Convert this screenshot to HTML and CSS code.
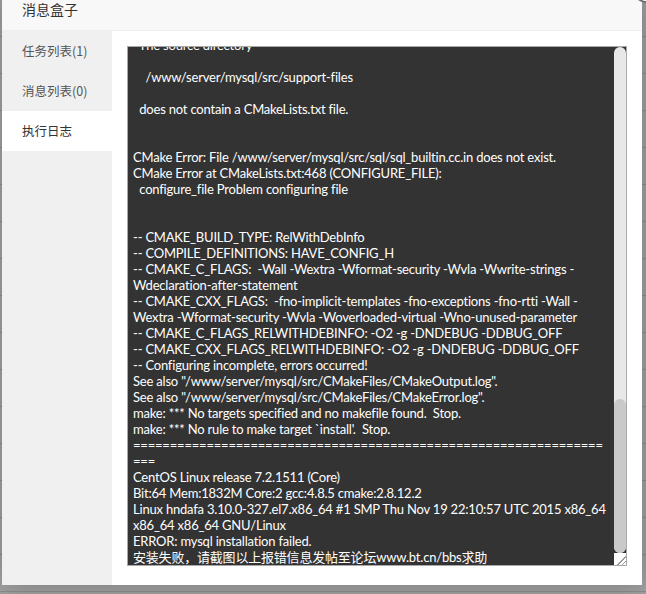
FILE: index.html
```html
<!DOCTYPE html>
<html lang="zh-CN">
<head>
  <meta charset="UTF-8" />
  <title>消息盒子</title>
  <link rel="stylesheet" href="styles.css">
</head>
<body>
  <div class="layer">
    <span class="layer-close"></span>
    <div class="layer-title">消息盒子</div>
    <div class="layer-body">
      <ul class="tabs">
        <li>任务列表(1)</li>
        <li>消息列表(0)</li>
        <li class="active">执行日志</li>
      </ul>
      <div class="tab-content">
        <div class="log-box">
          <div class="log-view">
<pre class="log-lines">  The source directory

    /www/server/mysql/src/support-files

  does not contain a CMakeLists.txt file.


CMake Error: File /www/server/mysql/src/sql/sql_builtin.cc.in does not exist.
CMake Error at CMakeLists.txt:468 (CONFIGURE_FILE):
  configure_file Problem configuring file


-- CMAKE_BUILD_TYPE: RelWithDebInfo
-- COMPILE_DEFINITIONS: HAVE_CONFIG_H
-- CMAKE_C_FLAGS:  -Wall -Wextra -Wformat-security -Wvla -Wwrite-strings -
Wdeclaration-after-statement
-- CMAKE_CXX_FLAGS:  -fno-implicit-templates -fno-exceptions -fno-rtti -Wall -
Wextra -Wformat-security -Wvla -Woverloaded-virtual -Wno-unused-parameter
-- CMAKE_C_FLAGS_RELWITHDEBINFO: -O2 -g -DNDEBUG -DDBUG_OFF
-- CMAKE_CXX_FLAGS_RELWITHDEBINFO: -O2 -g -DNDEBUG -DDBUG_OFF
-- Configuring incomplete, errors occurred!
See also "/www/server/mysql/src/CMakeFiles/CMakeOutput.log".
See also "/www/server/mysql/src/CMakeFiles/CMakeError.log".
make: *** No targets specified and no makefile found.  Stop.
make: *** No rule to make target `install'.  Stop.
================================================================
===
CentOS Linux release 7.2.1511 (Core)
Bit:64 Mem:1832M Core:2 gcc:4.8.5 cmake:2.8.12.2
Linux hndafa 3.10.0-327.el7.x86_64 #1 SMP Thu Nov 19 22:10:57 UTC 2015 x86_64
x86_64 x86_64 GNU/Linux
ERROR: mysql installation failed.
安装失败，请截图以上报错信息发帖至论坛www.bt.cn/bbs求助</pre>
          </div>
          <div class="scrollbar">
            <div class="scroll-track"><div class="scroll-thumb"></div></div>
            <div class="resizer"></div>
          </div>
        </div>
      </div>
    </div>
  </div>
</body>
</html>
```

FILE: styles.css
```css
html, body {
  height: 100%;
}

body {
  margin: 0;
  overflow: hidden;
  background: #a2a2a2;
  background-image: repeating-linear-gradient(#a2a2a2 0, #a2a2a2 36px, #8e8e8e 36px, #8e8e8e 37px);
  font-family: "Noto Sans CJK SC", sans-serif;
}

.layer {
  position: relative;
  width: 640px;
  margin: -12px 0 0 2px;
  background: #fff;
  box-shadow: 1px 1px 30px rgba(0, 0, 0, 0.25);
}

.layer-close {
  position: absolute;
  top: -15px;
  right: -20px;
  width: 26px;
  height: 26px;
  border-radius: 50%;
  border: 2px solid #6f6f6f;
  background: #fff;
}

.layer-title {
  height: 42px;
  line-height: 42px;
  padding-left: 20px;
  font-size: 14px;
  color: #333;
  background: #f8f8f8;
  border-bottom: 1px solid #eee;
}

.layer-body {
  display: flex;
  height: 554px;
}

.tabs {
  flex: 0 0 110px;
  margin: 0;
  padding: 0;
  list-style: none;
  background: #f0f0f0;
}

.tabs li {
  height: 40px;
  line-height: 40px;
  padding-left: 20px;
  font-size: 12.5px;
  color: #555;
}

.tabs li.active {
  background: #fff;
  color: #333;
}

.tab-content {
  flex: 1;
  min-width: 0;
  padding: 15px 15px 19px;
}

.log-box {
  display: flex;
  height: 518px;
  border: 1px solid #a9a9a9;
  background: #333;
}

.log-view {
  flex: 1;
  min-width: 0;
  display: flex;
  flex-direction: column;
  justify-content: flex-end;
  overflow: hidden;
  padding-left: 5px;
}

.log-lines {
  margin: 0;
  font-family: "Lato", "Noto Sans CJK SC", sans-serif;
  font-size: 13px;
  line-height: 16px;
  letter-spacing: -0.2px;
  color: #fff;
  white-space: pre;
}

.scrollbar {
  flex: 0 0 12px;
  display: flex;
  flex-direction: column;
}

.scroll-track {
  flex: 1;
  display: flex;
  flex-direction: column;
  justify-content: flex-end;
  border-radius: 6px;
  overflow: hidden;
  background: #e8e8e8;
}

.scroll-thumb {
  height: 154px;
  border-radius: 6px 6px 0 0;
  background: #c9c9c9;
}

.resizer {
  height: 12px;
  background: #fff linear-gradient(135deg, transparent 62%, #999 62%, #999 68%, transparent 68%, transparent 80%, #999 80%, #999 86%, transparent 86%);
}
```
